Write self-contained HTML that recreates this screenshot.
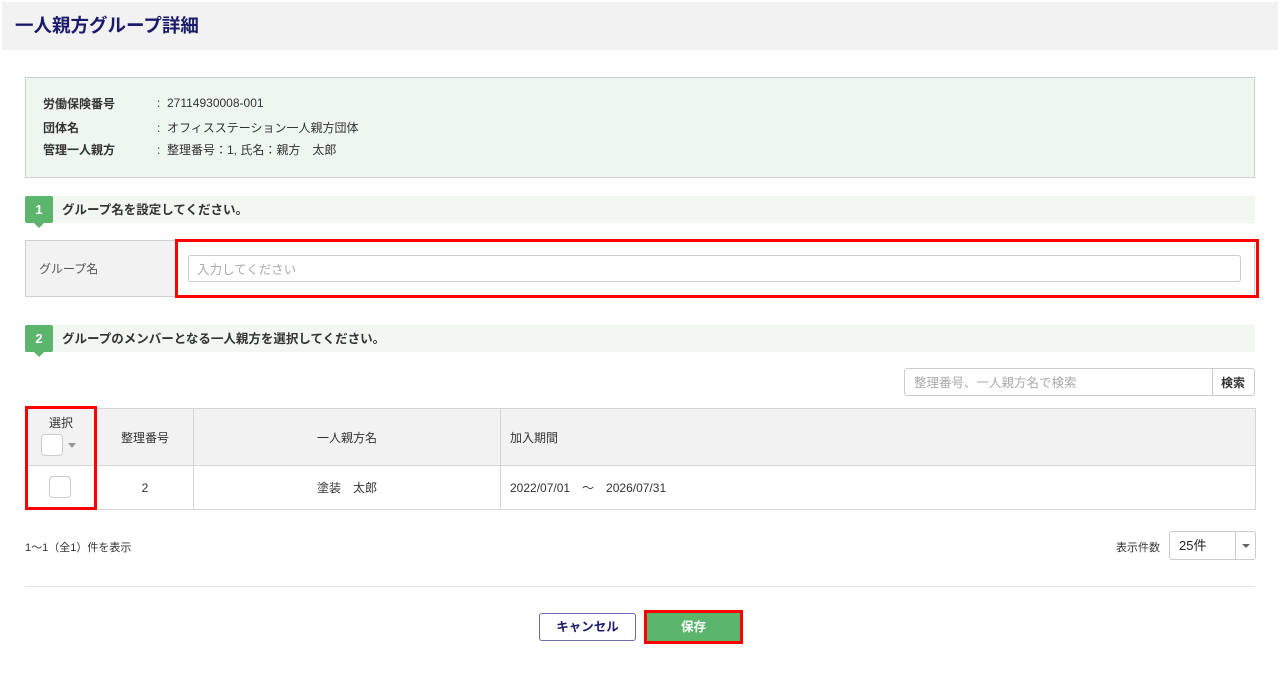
<!DOCTYPE html>
<html><head><meta charset="utf-8"><style>
*{box-sizing:border-box;margin:0;padding:0}
body{width:1280px;height:678px;background:#fff;font-family:"Liberation Sans","Noto Sans CJK JP",sans-serif;color:#333;position:relative;overflow:hidden;font-size:12px}
.a{position:absolute}
.hdr{left:2px;top:2px;width:1276px;height:48px;background:#f2f2f2}
.title{left:15px;top:12px;font-size:18.5px;font-weight:bold;color:#1b1b6b}
.info{left:25px;top:77px;width:1230px;height:101px;background:#eef7ef;border:1px solid #d0d0d0}
.lbl{font-weight:bold;font-size:12px;color:#333}
.step{left:25px;width:1230px;height:27px;background:#f1f8f1}
.badge{position:absolute;left:0;top:0;width:28px;height:27px;background:#5cb56c;color:#fff;font-weight:bold;font-size:13px;text-align:center;line-height:27px;border-radius:2px}
.badge:after{content:"";position:absolute;left:9px;bottom:-5px;border-left:5px solid transparent;border-right:5px solid transparent;border-top:5px solid #5cb56c}
.stxt{position:absolute;left:37px;top:3px;font-weight:bold;font-size:12.5px;color:#333}
.cb{width:22px;height:22px;border:1px solid #ccc;border-radius:4px;background:#fff}
td,th{border:1px solid #d5d5d5;font-weight:normal;font-size:12px;color:#333}
</style></head><body>
<div class="a hdr"></div>
<div class="a title">一人親方グループ詳細</div>
<div class="a info"></div>
<div class="a lbl" style="left:43px;top:95px">労働保険番号</div>
<div class="a lbl" style="left:43px;top:119px">団体名</div>
<div class="a lbl" style="left:43px;top:141px">管理一人親方</div>
<div class="a" style="left:157px;top:96px">:&nbsp; 27114930008-001</div>
<div class="a" style="left:157px;top:119px">:&nbsp; オフィスステーション一人親方団体</div>
<div class="a" style="left:157px;top:141px">:&nbsp; 整理番号：1, 氏名：親方　太郎</div>

<div class="a step" style="top:196px"><div class="badge">1</div><div class="stxt">グループ名を設定してください。</div></div>
<div class="a" style="left:25px;top:240px;width:1230px;height:57px;border:1px solid #d0d0d0;background:#fff"></div>
<div class="a" style="left:26px;top:241px;width:150px;height:55px;background:#f2f2f2"></div>
<div class="a" style="left:39px;top:260px;color:#555">グループ名</div>
<div class="a" style="left:188px;top:255px;width:1053px;height:27px;border:1px solid #ccc;border-radius:3px;background:#fff;color:#aaa;padding:3px 8px;font-size:12.5px">入力してください</div>
<div class="a" style="left:175px;top:239px;width:1084px;height:59px;border:3px solid #f00"></div>

<div class="a step" style="top:325px"><div class="badge">2</div><div class="stxt">グループのメンバーとなる一人親方を選択してください。</div></div>

<div class="a" style="left:904px;top:368px;width:351px;height:28px;border:1px solid #ccc;border-radius:3px;background:#fff"></div>
<div class="a" style="left:914px;top:372px;color:#aaa;font-size:12.5px">整理番号、一人親方名で検索</div>
<div class="a" style="left:1212px;top:369px;width:1px;height:26px;background:#ccc"></div>
<div class="a" style="left:1221px;top:374px;font-weight:bold;font-size:12px">検索</div>

<table class="a" style="left:25px;top:408px;width:1231px;border-collapse:collapse">
<tr style="height:57px;background:#f2f2f2"><th style="width:71px"></th><th style="width:97px">整理番号</th><th style="width:307px">一人親方名</th><th style="text-align:left;padding-left:9px">加入期間</th></tr>
<tr style="height:44px"><td></td><td style="text-align:center">2</td><td style="text-align:center">塗装　太郎</td><td style="padding-left:9px">2022/07/01　～　2026/07/31</td></tr>
</table>
<div class="a" style="left:49px;top:414px">選択</div>
<div class="a cb" style="left:41px;top:434px"></div>
<div class="a" style="left:68px;top:443px;border-left:4px solid transparent;border-right:4px solid transparent;border-top:5px solid #999"></div>
<div class="a cb" style="left:49px;top:476px"></div>
<div class="a" style="left:25px;top:406px;width:72px;height:104px;border:3px solid #f00"></div>

<div class="a" style="left:25px;top:539px;font-size:11px">1～1（全1）件を表示</div>
<div class="a" style="left:1116px;top:539px;font-size:11px">表示件数</div>
<div class="a" style="left:1169px;top:531px;width:87px;height:29px;border:1px solid #ccc;border-radius:3px;background:#fff"></div>
<div class="a" style="left:1179px;top:535px;font-size:13px;color:#222">25件</div>
<div class="a" style="left:1235px;top:532px;width:1px;height:27px;background:#ccc"></div>
<div class="a" style="left:1242px;top:544px;border-left:4px solid transparent;border-right:4px solid transparent;border-top:4px solid #666"></div>

<div class="a" style="left:25px;top:586px;width:1230px;height:1px;background:#e5e5e5"></div>
<div class="a" style="left:539px;top:613px;width:97px;height:28px;border:1px solid #6d6db0;border-radius:3px;background:#fff;text-align:center;line-height:26px;font-weight:bold;color:#1b1b6b;font-size:12.5px">キャンセル</div>
<div class="a" style="left:644px;top:610px;width:99px;height:34px;border:3px solid #f00;background:#5cb56c;text-align:center;line-height:28px;font-weight:bold;color:#fff;font-size:12.5px">保存</div>
</body></html>
